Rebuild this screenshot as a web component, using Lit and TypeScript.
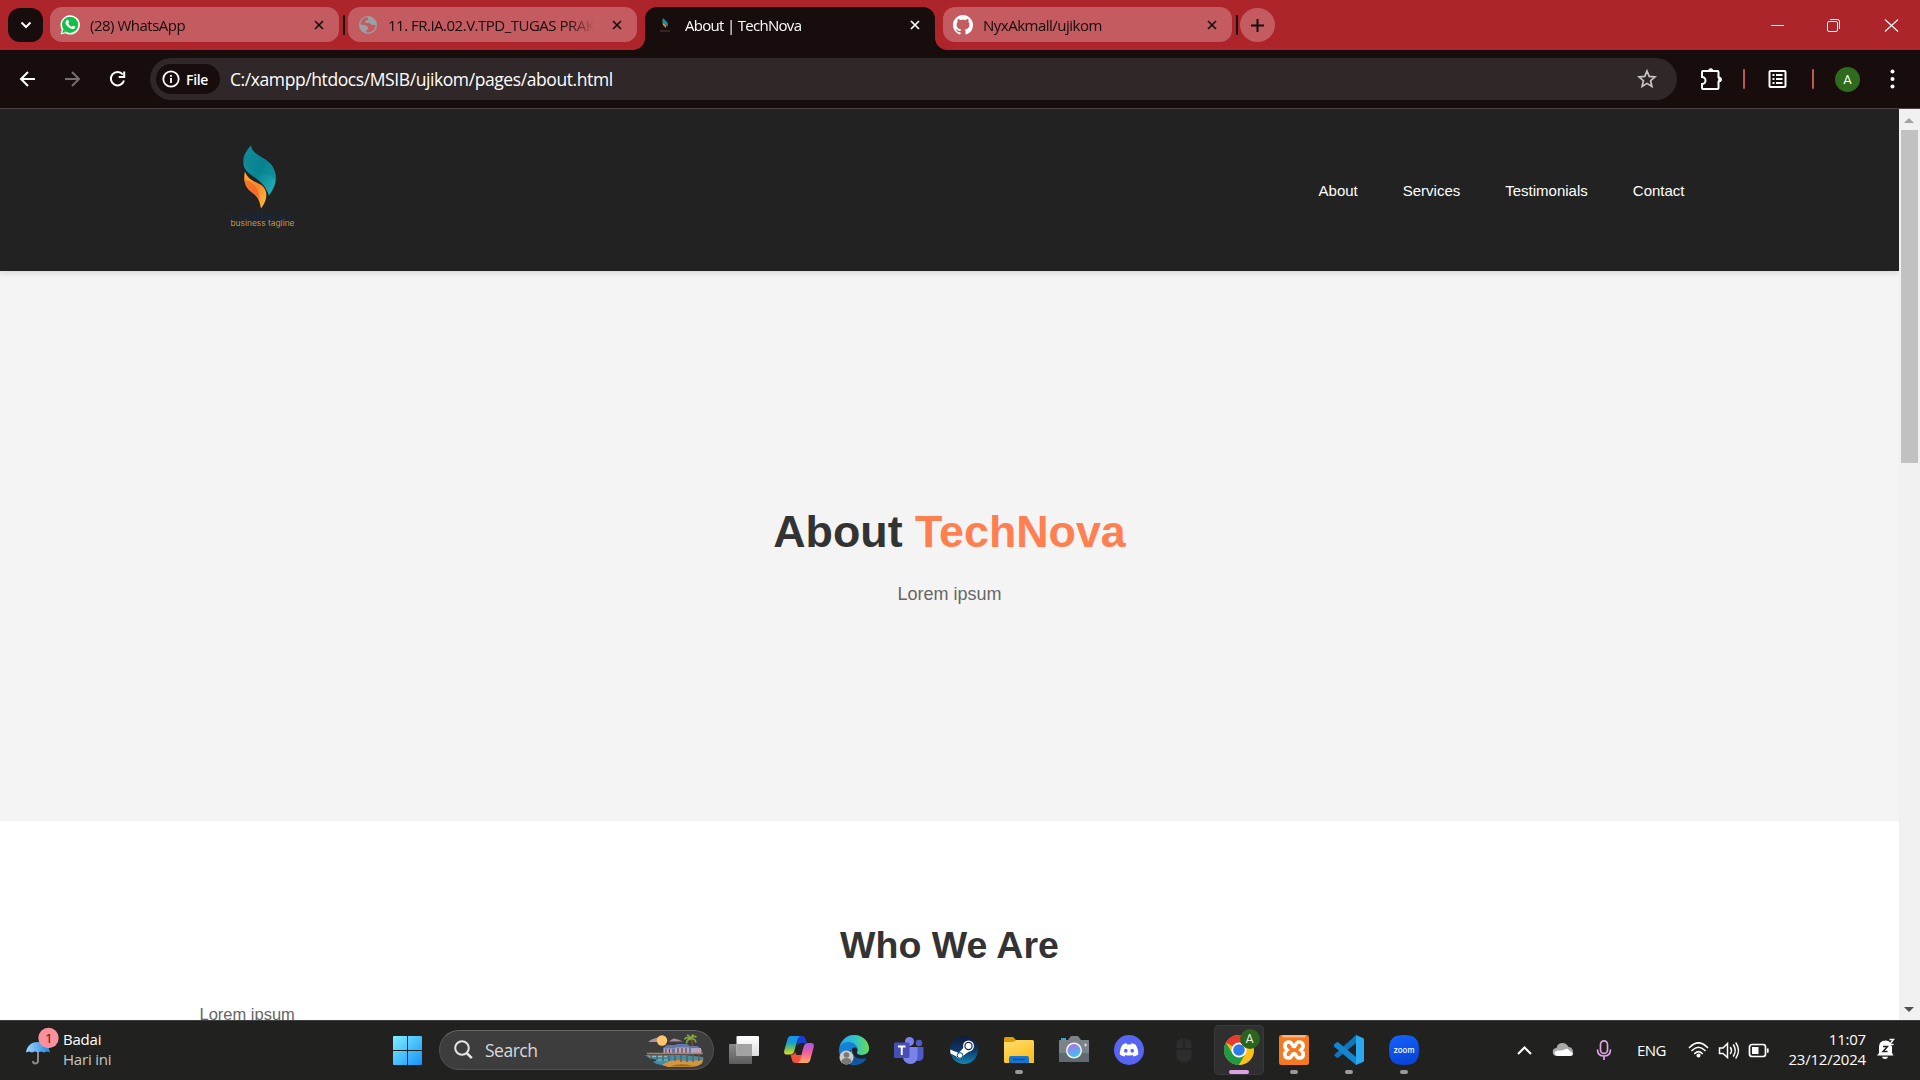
import { LitElement, html, css, svg, TemplateResult } from "lit";
import { customElement, property } from "lit/decorators.js";

const closeIcon = html`<svg class="close" width="10" height="10" viewBox="0 0 10 10"><path d="M1 1l8 8M9 1l-8 8" stroke="currentColor" stroke-width="1.700" fill="none" /></svg>`;

const flame = svg`
  <path d="M51 15C45 22 42 28 44 36C47 46 63 47 69 65C77 55 78 45 72 35C66 27 52 25 51 15Z" fill="url(#teal)"/>
  <path d="M44 32C50 43 68 42 75 49C78 42 72 35 66 29C58 24 52 22 51 15C45 22 42 26 44 32Z" fill="#0b7f8b" opacity=".45"/>
  <path d="M45 41C43 50 45 57 52 62C58 66 60 71 61 78C68 69 68 60 62 55C56 51 48 50 45 41Z" fill="url(#amber)"/>
  <path d="M45 41C43 50 45 57 52 62C56 64 58 66 59 70C60 60 56 53 45 49Z" fill="#f4632a" opacity=".75"/>`;

const whatsapp = html`<svg width="20" height="20" viewBox="0 0 20 20">
  <path d="M.5 19.600L1.800 14.800A9.700 9.700 0 1 1 5.300 18.300Z" fill="#fff"/>
  <circle cx="10.100" cy="9.800" r="8.100" fill="#12c143"/><path d="M2.200 17.900l1-3.700 2.700 2.700z" fill="#12c143"/>
  <path d="M6.700 5.200c.8-.7 1.400-.5 1.700.2l.7 1.700c.1.500-.6 1-.8 1.400 1 1.800 2 2.600 3.600 3.300.5-.3.900-1.200 1.400-1.100l1.700.9c.6.400.1 1.700-.7 2.200-1.200.8-3 .3-4.900-.8-1.700-1-3-2.500-3.600-3.900-.6-1.500-.1-3.200.9-3.900z" fill="#fff"/></svg>`;
const globe = html`<svg width="20" height="20" viewBox="0 0 20 20"><circle cx="10" cy="10" r="9" fill="#9aa0a6"/>
  <path d="M8.500 2.500C5 3 2.500 6 2.600 9.500L7 10l3 2v2.500l-2 1 .5 2c5 .8 9-3 9-7.500h-3.500L11.500 8H7.500V6l2.500-1.500V2.400z" fill="#c35b60"/>
  <path d="M13 3.200l-1.500 2.300 1.500 2 3.500.8C16.300 5.900 15 4.200 13 3.200z" fill="#9aa0a6"/></svg>`;
const smallFlame = html`<svg width="20" height="20" viewBox="0 0 20 20"><path d="M8 3Q6.500 6 8 8L12.500 11.500Q14 8.500 11 6Z" fill="#13909d"/><path d="M7.500 7.500Q7.500 10 9 11L11 13Q12 11 10 9.500Z" fill="#f5942d"/><path d="M5 16h10" stroke="#4e4138"/></svg>`;
const github = html`<svg width="20" height="20" viewBox="0 0 16 16"><path fill="#fff" d="M8 0C3.580 0 0 3.580 0 8c0 3.540 2.290 6.530 5.470 7.590.4.070.55-.17.55-.38 0-.19-.01-.82-.01-1.490-2.010.37-2.530-.49-2.690-.94-.09-.23-.48-.94-.82-1.130-.28-.15-.68-.52-.01-.53.63-.01 1.080.58 1.230.82.72 1.210 1.870.87 2.330.66.07-.52.28-.87.51-1.070-1.780-.2-3.640-.89-3.640-3.950 0-.87.31-1.590.82-2.150-.08-.2-.36-1.020.08-2.120 0 0 .67-.21 2.200.82.64-.18 1.320-.27 2-.27s1.360.09 2 .27c1.530-1.040 2.200-.82 2.200-.82.44 1.100.16 1.920.08 2.120.51.56.82 1.270.82 2.150 0 3.070-1.870 3.750-3.650 3.950.29.25.54.73.54 1.480 0 1.070-.01 1.930-.01 2.200 0 .21.15.46.55.38A8.010 8.010 0 0 0 16 8c0-4.420-3.580-8-8-8z"/></svg>`;

@customElement("browser-tab")
class BrowserTab extends LitElement {
  @property() label = "";
  @property({ attribute: false }) icon: TemplateResult | null = null;
  @property({ type: Boolean, reflect: true }) active = false;
  static styles = css`
    :host { display: block; width: 289px; height: 35px; flex: none; }
    :host([active]) { width: 290px; }
    .tab { height: 35px; box-sizing: border-box; border-radius: 12px; background: #c35b60; color: #160d0c; display: flex; align-items: center; padding: 0 15px 0 10px; position: relative; }
    :host([active]) .tab { background: #160d0c; color: #fff; height: 43px; border-radius: 12px 12px 0 0; padding-bottom: 8px; }
    .label { flex: 1; margin: 0 17px 0 10px; white-space: nowrap; overflow: hidden; font: 15px/20px "Open Sans", sans-serif; letter-spacing: -0.500px; mask-image: linear-gradient(90deg, #000 calc(100% - 28px), transparent); }
    :host([active]) .label { letter-spacing: -0.700px; }
    .close { flex: none; }
    .flare { position: absolute; bottom: 0; width: 12px; height: 12px; display: none; }
    :host([active]) .flare { display: block; }
    .left { left: -12px; background: radial-gradient(circle at 0 0, transparent 11.500px, #160d0c 12.200px); }
    .right { right: -12px; background: radial-gradient(circle at 100% 0, transparent 11.500px, #160d0c 12.200px); }
  `;
  render() {
    return html`<div class="tab">${this.icon}<span class="label">${this.label}</span>${closeIcon}<i class="flare left"></i><i class="flare right"></i></div>`;
  }
}

@customElement("browser-chrome")
class BrowserChrome extends LitElement {
  static styles = css`
    :host { display: block; font-family: "Open Sans", sans-serif; }
    .strip { height: 50px; background: #ad252b; display: flex; align-items: flex-start; box-sizing: border-box; padding: 7px 0 0 8px; }
    .drop { width: 35px; height: 34px; border-radius: 12px; background: #160d0c; margin: 1px 7px 0 0; display: grid; place-items: center; }
    .bar { width: 2.500px; height: 20px; margin: 8px 3px 0 3.500px; border-radius: 1px; background: #160d0c; }
    .plus { width: 35px; height: 34px; border-radius: 50%; background: #c35b60; margin: 1px 0 0 -1px; display: grid; place-items: center; }
    .gapA { margin-left: 8px; }
    .controls { margin-left: auto; display: flex; height: 35px; align-items: center; }
    .controls svg { display: block; }
    .tools { height: 59px; box-sizing: border-box; border-bottom: 1px solid #4a4342; background: #160d0c; display: flex; align-items: center; }
    .tools > svg { display: block; flex: none; }
    .omni { width: 1527px; height: 42px; border-radius: 21px; background: #302728; display: flex; align-items: center; box-sizing: border-box; padding: 0 20px 0 6px; margin-left: 22px; flex: none; }
    .chip { width: 64px; height: 30px; border-radius: 15px; background: #160d0c; display: flex; align-items: center; box-sizing: border-box; padding-left: 6px; gap: 6px; color: #fff; font-size: 14px; font-weight: 600; letter-spacing: -.3px; }
    .url { flex: 1; margin-left: 10px; color: #fff; font-size: 17.500px; line-height: 24px; letter-spacing: -.41px; white-space: nowrap; }
    .rule { width: 2px; height: 20px; background: #c0565b; border-radius: 1px; }
    .me { width: 25px; height: 25px; border-radius: 50%; background: #2f6a1d; color: #fff; font: 13px/25px Roboto, sans-serif; text-align: center; margin-left: 21px; }
    .tools > * { flex: none; }
  `;
  render() {
    return html`
      <div class="strip">
        <div class="drop"><svg width="12" height="8" viewBox="0 0 12 8"><path d="M1.500 1.500L6 6l4.500-4.500" fill="none" stroke="#fff" stroke-width="2"/></svg></div>
        <browser-tab label="(28) WhatsApp" .icon=${whatsapp}></browser-tab>
        <div class="bar"></div>
        <browser-tab label="11. FR.IA.02.V.TPD_TUGAS PRAKTIK" .icon=${globe}></browser-tab>
        <browser-tab class="gapA" active label="About | TechNova" .icon=${smallFlame}></browser-tab>
        <browser-tab class="gapA" label="NyxAkmall/ujikom" .icon=${github}></browser-tab>
        <div class="bar"></div>
        <div class="plus"><svg width="13" height="13" viewBox="0 0 13 13"><path d="M6.500 0v13M0 6.500h13" stroke="#160d0c" stroke-width="2"/></svg></div>
        <div class="controls">
          <svg width="150" height="20" viewBox="0 0 150 20" fill="none" stroke="#fff">
            <path d="M1 10.500h13"/>
            <rect x="57.500" y="6.500" width="10" height="10" rx="1.500"/><path d="M60 4.500h7.500q2 0 2 2V14" />
            <path d="M115 4.500l13 12M128 4.500l-13 12" stroke-width="1.100"/>
          </svg>
        </div>
      </div>
      <div class="tools">
        <svg width="128" height="30" viewBox="0 0 128 30" fill="none" stroke="#fff" stroke-width="2">
          <path d="M35 15H21M28 8l-7 7 7 7"/>
          <path d="M65 15h14M72 8l7 7-7 7" stroke="#766e6d"/>
          <path d="M122.800 10.500A6.700 6.700 0 1 0 124 16.500M124.200 7.500v5.500h-5.500"/>
        </svg>
        <div class="omni">
          <div class="chip"><svg width="18" height="18" viewBox="0 0 18 18" fill="none" stroke="#fff" stroke-width="1.800"><circle cx="9" cy="9" r="7.700"/><path d="M9 8v5M9 5v1.800"/></svg>File</div>
          <span class="url">C:/xampp/htdocs/MSIB/ujikom/pages/about.html</span>
          <svg width="20" height="20" viewBox="0 0 20 20"><path d="M10 2l2.200 5.400 5.800.5-4.400 3.800 1.300 5.700L10 14.400l-4.900 3 1.300-5.700L2 7.900l5.800-.5z" fill="none" stroke="#c9c5c5" stroke-width="1.700"/></svg>
        </div>
        <svg width="66" height="28" viewBox="0 0 66 28" fill="none" stroke="#fff" stroke-width="2">
          <path d="M26 6h14.500q1 0 1 1v5.500a2.300 2.300 0 0 1 0 4V23q0 1-1 1H26q-1 0-1-1v-4a3.500 3.500 0 0 0 0-7V7q0-1 1-1z"/><path d="M31.500 5.500a2.300 2.300 0 0 1 4.500 0z" fill="#fff" stroke-width="1"/><path d="M42 12a2.500 2.500 0 0 1 0 5z" fill="#fff" stroke-width="1"/>
        </svg>
        <div class="rule"></div>
        <svg width="67" height="24" viewBox="0 0 67 24" fill="none" stroke="#fff" stroke-width="2">
          <rect x="24.500" y="4" width="16" height="16" rx="1"/><path d="M27.500 8h2M27.500 12h2M27.500 16h2M31 8h6.500M31 12h6.500M31 16h6.500" stroke-width="1.800"/>
        </svg>
        <div class="rule"></div>
        <div class="me">A</div>
        <svg width="40" height="24" viewBox="0 0 40 24" fill="#fff"><circle cx="32.500" cy="4.500" r="2"/><circle cx="32.500" cy="12" r="2"/><circle cx="32.500" cy="19.500" r="2"/></svg>
      </div>`;
  }
}

@customElement("site-page")
class SitePage extends LitElement {
  static styles = css`
    :host { display: flex; height: 911px; overflow: hidden; background: #fff; font-family: "Liberation Sans", Arial, sans-serif; }
    .doc { width: 1899px; height: 911px; overflow: hidden; flex: none; }
    .nav { height: 162px; background: #222; box-shadow: 0 2px 6px rgba(0,0,0,.12); position: relative; display: flex; align-items: center; justify-content: space-between; box-sizing: border-box; padding: 0 214.500px 0 200px; }
    .logo { display: block; }
    .links { display: flex; gap: 45px; color: #fff; font-size: 15px; line-height: 20px; padding-top: 2px; }
    .hero { height: 550px; background: #f4f4f4; text-align: center; box-sizing: border-box; padding-top: 234px; }
    h1 { margin: 0; font-size: 44.800px; line-height: 52px; color: #333; }
    .brand { color: #ff7f50; }
    .lead { margin: 24px 0 0; font-size: 18px; line-height: 26px; color: #666; }
    h2 { margin: 0; padding-top: 102px; text-align: center; font-size: 37.500px; line-height: 44px; color: #333; }
    .copy { margin: 35px 0 0 199.500px; font-size: 16.500px; line-height: 24px; color: #666; }
    .scroll { width: 21px; background: #f1f1f1; display: flex; flex-direction: column; align-items: center; box-sizing: border-box; padding: 9px 1px 8px 0; }
    .up, .down { width: 0; height: 0; border: 5px solid transparent; border-top: 0; border-bottom: 5px solid #a3a3a3; }
    .thumb { width: 17px; height: 333px; background: #c1c1c1; margin-top: 7px; margin-bottom: auto; }
    .down { border-bottom: 0; border-top: 5px solid #505050; }
  `;
  render() {
    return html`
      <div class="doc">
        <div class="nav">
          <svg class="logo" width="125" height="125" viewBox="0 0 125 125">
            <defs>
              <linearGradient id="teal" x1="0" y1="0" x2="1" y2="1"><stop offset="0" stop-color="#1a9aa8"/><stop offset=".5" stop-color="#078591"/><stop offset="1" stop-color="#26b6c0"/></linearGradient>
              <linearGradient id="amber" x1="0" y1="0" x2="1" y2="1"><stop offset="0" stop-color="#ffb52b"/><stop offset=".5" stop-color="#f7862f"/><stop offset="1" stop-color="#fbc23a"/></linearGradient>
            </defs>
            <g transform="translate(0 2.500)">${flame}</g>
            <text x="30.500" y="92" font-family="Lato, sans-serif" font-size="10" fill="#122a4c" textLength="63" lengthAdjust="spacingAndGlyphs">COMPANY</text>
            <text x="30.500" y="98" font-family="Inter, sans-serif" font-size="7.500" fill="#c39a52" textLength="64" lengthAdjust="spacingAndGlyphs">business tagline</text>
          </svg>
          <div class="links"><span>About</span><span>Services</span><span>Testimonials</span><span>Contact</span></div>
        </div>
        <div class="hero">
          <h1>About <span class="brand">TechNova</span></h1>
          <p class="lead">Lorem ipsum</p>
        </div>
        <h2>Who We Are</h2>
        <p class="copy">Lorem ipsum</p>
      </div>
      <div class="scroll"><i class="up"></i><i class="thumb"></i><i class="down"></i></div>`;
  }
}

const apps: { art: TemplateResult; run?: string }[] = [
  { art: svg`<defs><linearGradient id="tv" x2="0" y2="1"><stop stop-color="#fff"/><stop offset="1" stop-color="#ddd"/></linearGradient><linearGradient id="tg" x2="0" y2="1"><stop stop-color="#8a8a8a"/><stop offset="1" stop-color="#5d5d5d"/></linearGradient></defs>
      <rect y="9" width="23" height="20" rx="1" fill="url(#tg)"/><rect x="7.500" y="1" width="22.500" height="20" rx="1" fill="url(#tv)"/><rect x="7.500" y="9" width="15.500" height="12" fill="#a3a3a3"/>` },
  { art: svg`<defs><linearGradient id="cpa" x2="0" y2="1"><stop stop-color="#1593f2"/><stop offset=".35" stop-color="#159ed0"/><stop offset=".65" stop-color="#62bf68"/><stop offset="1" stop-color="#f4d51c"/></linearGradient><linearGradient id="cpb" x2="0" y2="1"><stop stop-color="#a757ee"/><stop offset=".5" stop-color="#f2609a"/><stop offset="1" stop-color="#ffab5e"/></linearGradient></defs>
      <path d="M14 1h4c2 0 3 1 3.500 3l1.200 4H17l-4 2z" fill="#1a3fd0"/>
      <path d="M6.500 1H17c-2 0-2.800 1.500-3.400 3.500L10.300 16c-.6 2-1.800 3.500-4 3.500H2.800C.5 19.500-.3 18 .3 15.500L3.400 4.500C4 2.300 5 1 6.500 1z" fill="url(#cpa)"/>
      <path d="M16 28h-4.500c-2 0-3-1-3.500-3L6.700 20c2.300 0 3.600-1 4.300-3l1.500 3h5z" fill="#f2503c"/>
      <path d="M23 28H12.800c2 0 2.800-1.500 3.400-3.500l3.400-12.500c.6-2.300 1.800-4 4-4h3.600c2.300 0 3.100 1.500 2.500 4l-3.300 12.500C25.800 26.700 24.800 28 23 28z" fill="url(#cpb)"/>` },
  { art: svg`<defs><linearGradient id="eg"><stop stop-color="#2aa6e8"/><stop offset=".5" stop-color="#2fc4c9"/><stop offset="1" stop-color="#69dc4f"/></linearGradient></defs>
      <circle cx="15" cy="15" r="15" fill="#1580d6"/><path d="M1 11C4 3 10 0 15 0c9 0 15 7 15 13 0 5-4 7-7.500 7-3 0-5-1-4.500-2.500 1-2 1-3 .5-4.500C16 6 6 5 1 11z" fill="url(#eg)"/>
      <path d="M12 15c-2 7 3 14 15 9-4 7-16 8-20 1-2-4-1-10 5-10z" fill="#1255a0"/><path d="M13 14c2-3 7-1 5 3-.6 2 1.500 3 4.500 3 3 0 6-1 7.500-4v7l-2.500 1c-8 3-15-3-14.500-10z" fill="#212120"/>
      <path d="M13 16c0 6 6 9 14.500 7q-1.500 3-5 5-7 1-9.500-5z" fill="#1255a0"/>
      <circle cx="7.500" cy="22.500" r="7" fill="#cfcbc6"/><circle cx="7.500" cy="20" r="2.800" fill="#777"/><path d="M2.500 27q0-4 5-4t5 4q-5 5-10 0z" fill="#777"/>` },
  { art: svg`<circle cx="15.500" cy="6.500" r="4.500" fill="#7b83eb"/><circle cx="25" cy="8" r="3.200" fill="#5059c9"/><path d="M20 12h9.500v9c0 3-2 5-5 5s-5-2-5-5z" fill="#5059c9"/><path d="M9 12h14.500v10c0 4-3 7-7 7s-7.500-3-7.500-7z" fill="#7b83eb"/><rect y="7.500" width="15.500" height="15.500" rx="1.500" fill="#464eb8"/><path d="M4 11.500h7.500M7.750 11.500V20" stroke="#fff" stroke-width="1.900"/>` },
  { art: svg`<defs><linearGradient id="st" x2="0" y2="1"><stop stop-color="#111a3c"/><stop offset=".5" stop-color="#0c3766"/><stop offset="1" stop-color="#1387b8"/></linearGradient></defs><circle cx="15" cy="15" r="14" fill="url(#st)"/><path d="M1.200 14.500l8.500 3.500 5-5.500 6 3.500-6 4.200a4 4 0 0 1-7.500 1L1.500 18.500z" fill="#fff"/><circle cx="19.500" cy="11" r="5.500" fill="#fff"/><circle cx="19.500" cy="11" r="3.600" fill="#fff" stroke="#10284f" stroke-width="1.200"/><circle cx="11" cy="20.500" r="2.800" fill="#fff" stroke="#10496f"/>` },
  { run: "on", art: svg`<defs><linearGradient id="fo" x2=".6" y2="1"><stop stop-color="#ffdf70"/><stop offset="1" stop-color="#fdbe1c"/></linearGradient></defs><path d="M0 3.500Q0 2 1.500 2H9l3.500 3.500V10H0z" fill="#dd9d09"/><path d="M0 7h9l3.500-2H28.500Q30 5 30 6.500V28H1.500Q0 28 0 26.500z" fill="url(#fo)"/><path d="M5 28v-5q0-2 2-2h16q2 0 2 2v5z" fill="#1476cf"/><path d="M9 24.500h12" stroke="#0b4e94" stroke-width="1.500"/>` },
  { art: svg`<rect x="2" y="3" width="5" height="3" fill="#24a9e6"/><path d="M0 6q0-1 1-1h8l3-4h7l3 4h7q1 0 1 1v20q0 1-1 1H1q-1 0-1-1z" fill="#7b838a"/><path d="M0 18h30v8q0 1-1 1H1q-1 0-1-1z" fill="#626a71"/><defs><linearGradient id="ca" x2=".4" y2="1"><stop stop-color="#b86adf"/><stop offset="1" stop-color="#3ec0f5"/></linearGradient></defs><circle cx="15" cy="15.500" r="8" fill="#f3f3f3"/><circle cx="15" cy="15.500" r="6.500" fill="url(#ca)"/><path d="M26.500 8.500v3M25 10h3" stroke="#ddd"/>` },
  { art: svg`<circle cx="15" cy="15" r="15" fill="#5865f2"/><path d="M8.700 9.500Q11 8.400 12.600 8.300L13.200 9.600Q15 9.300 16.800 9.600L17.400 8.300Q19.500 8.500 21.400 9.500Q24.600 14 24.200 19.500Q22 21.200 19.600 21.600L18.700 20Q15 21 11.300 20L10.400 21.600Q8 21.200 5.800 19.500Q5.600 14 8.700 9.500z" fill="#fff"/><ellipse cx="11.800" cy="15.700" rx="1.800" ry="2" fill="#5865f2"/><ellipse cx="18.200" cy="15.700" rx="1.800" ry="2" fill="#5865f2"/>` },
  { art: svg`<path d="M14.200 3v10H7.500v-3.500Q7.500 4 14.200 3zM15.800 3v10h6.700v-3.500Q22.500 4 15.800 3zM7.500 14.500h15V21q0 6-7.500 6t-7.500-6z" fill="#2d2d2d"/>` },
  { run: "main", art: svg`<circle cx="15" cy="15" r="15" fill="#fbbc1b"/><path d="M15 15L2 7.500A15 15 0 0 1 28 7.500L28 8H15z" fill="#e63b2e"/><path d="M2 7.500A15 15 0 0 0 15 30L21.500 18.700 8.500 18.700z" fill="#219a47"/><path d="M15 8H28a15 15 0 0 1-13 22l6.500-11z" fill="#fbc116"/><circle cx="15" cy="15" r="7.500" fill="#fff"/><circle cx="15" cy="15" r="5.800" fill="#2c7be8"/>` },
  { run: "on", art: svg`<rect width="30" height="30" rx="2.500" fill="#f37a20"/><path d="M3 0h24l-1 2.500H4z" fill="#f9b27e"/><path d="M10 7c-5 0-5 5.500-2 8-3 2.500-3.500 8 1.500 8 4 0 3-4.500 5.500-4.500s1.500 4.500 5.500 4.500c5 0 4.500-5.500 1.500-8 3-2.500 3-8-2-8-4 0-2.500 4.500-5 4.500S14 7 10 7z" fill="none" stroke="#fff" stroke-width="3.600"/>` },
  { run: "on", art: svg`<path d="M0 20l2.500 2.500q1 .8 2 0L22 8V0z" fill="#0f76bd"/><path d="M0 9.500L2.500 7.500q1-.8 2 0L22 22v8L0 11.500q-.8-1 0-2z" fill="#1486cf"/><path d="M22 0l7 3q1 .5 1 1.500v21q0 1-1 1.500l-7 3z" fill="#28a9f0"/>` },
  { run: "on", art: svg`<defs><linearGradient id="zm" x2=".3" y2="1"><stop stop-color="#1463ff"/><stop offset="1" stop-color="#0a45d8"/></linearGradient></defs><path d="M15 0C26 0 30 4 30 15S26 30 15 30 0 26 0 15 4 0 15 0z" fill="url(#zm)"/><text x="4.500" y="17.500" font-family="Inter, sans-serif" font-weight="500" font-size="8" fill="#fff" textLength="21" lengthAdjust="spacingAndGlyphs">zoom</text>` },
];

@customElement("task-bar")
class TaskBar extends LitElement {
  static styles = css`
    :host { display: flex; height: 60px; background: #212120; border-top: 1px solid #3c3e3e; box-sizing: border-box; color: #fff; font: 15px/20px "Open Sans", sans-serif; align-items: flex-start; }
    svg { display: block; flex: none; }
    .weather { width: 393px; display: flex; padding-top: 8px; flex: none; }
    .wx { margin: -3px 2px 0 25px; }
    .dim { color: #c6c6c6; }
    .words { letter-spacing: -.2px; }
    .start { margin-top: 15px; }
    .search { width: 275px; height: 40px; margin: 9px 15px 0 17px; border-radius: 20px; box-sizing: border-box; border: 1px solid #505050; border-top-color: #666; background: #3d3d3d; display: flex; align-items: center; padding: 0 8px 0 14px; flex: none; }
    .ph { flex: 1; color: #dadada; font-size: 17.500px; line-height: 24px; letter-spacing: -.5px; margin-left: 12px; }
    .apps { display: flex; gap: 5px; margin: 4px 0 0 -10px; }
    .app { width: 50px; height: 50px; border-radius: 5px; box-sizing: border-box; padding: 10px 10px 0; position: relative; }
    .app.main { background: #2f2f2f; box-shadow: inset 0 0 0 1px #3a3a3a; }
    .pip { display: block; height: 4px; width: 8px; border-radius: 2px; background: #9a9a9a; margin: 5px auto 0; }
    .main .pip { width: 20px; background: #dda1e4; }
    .badge { position: absolute; left: 25.500px; top: 4px; width: 20px; height: 20px; border-radius: 50%; background: #2c641c; font: 12.500px/20px Roboto, sans-serif; color: #e4eee0; text-align: center; }
    .tray { margin-left: auto; display: flex; }
    .eng { width: 31px; margin: 19px 20px 0 0; letter-spacing: -.6px; }
    .clock { width: 97px; text-align: right; padding-top: 8px; letter-spacing: -.2px; }
    .bell { margin: 16px 24px 0 10px; }
    .net { margin-top: 19px; }
  `;
  render() {
    return html`
      <div class="weather">
        <svg class="wx" width="36" height="44" viewBox="0 0 36 44">
          <defs><linearGradient id="um"><stop stop-color="#9fd4fb"/><stop offset="1" stop-color="#1e86e4"/></linearGradient></defs>
          <path d="M13 24v11a2.500 2.500 0 0 1-5 0" fill="none" stroke="#8b8b8b" stroke-width="2" />
          <path d="M1 26.500C2 19 7 16 13 16s11 3 12 10.500l-3-1-3 1-3-1-3 1-3-1-3 1-3-1z" fill="url(#um)"/>
          <circle cx="23.500" cy="12" r="10.200" fill="#fb909c"/><text x="20" y="17" font-family="Open Sans, sans-serif" font-size="13.500" fill="#30191c">1</text>
        </svg>
        <div class="words"><div>Badai</div><div class="dim">Hari ini</div></div>
      </div>
      <svg class="start" width="29" height="29" viewBox="0 0 29 29"><defs><linearGradient id="win" gradientUnits="userSpaceOnUse" x1="0" y1="0" x2="29" y2="29"><stop stop-color="#7df0ff"/><stop offset="1" stop-color="#1592f8"/></linearGradient></defs><path fill="url(#win)" d="M0 1q0-1 1-1h13v14H0zM15 0h13q1 0 1 1v13H15zM0 15h14v14H1q-1 0-1-1zM15 15h14v13q0 1-1 1H15z"/></svg>
      <div class="search">
        <svg width="19" height="20" viewBox="0 0 19 20" fill="none" stroke="#e4e6ea"><circle cx="8" cy="8" r="6.800" stroke-width="2"/><path d="M12.800 13.200l5 5" stroke-width="2.600"/></svg>
        <span class="ph">Search</span>
        <svg width="61" height="33" viewBox="0 0 61 33">
          <path d="M4 8q3-3 8-4l3-1 3 5z" fill="#b08f9c"/><path d="M25 7.500q2-2 5-3l4 1 5 2z" fill="#a98a9b"/><circle cx="18" cy="6.500" r="5.200" fill="#fdc56f"/>
          <path d="M1 21h40l18 2q2 5-5 7l-20 2Q14 32 9 28l5-2-9-2z" fill="#3b8fb0"/><path d="M5 22.500h18M12 26h12" stroke="#7cc3cf"/>
          <path d="M18 31q10-7 24-4l17-1q0 6-12 7H24z" fill="#d3963e"/><path d="M26 32.500h24l-7-2q-10-1-17 2z" fill="#a36a21"/>
          <path d="M48 16Q49.500 9 46.500 5" stroke="#7d5229" stroke-width="1.500" fill="none"/>
          <path d="M46.500 5Q42 2 40.500 5.500M46.500 5Q42.500 5.500 42.500 9.500M46.500 5Q51 4 52 8.500M46.500 5Q49.500 1 52.500 3M46.500 5Q45.500 1.500 43 1M46.500 5Q47.500 2 49.500.500" stroke="#86a53c" stroke-width="1.600" fill="none"/>
          <path d="M19 14l4-3h8l2-1h10l3 2h8l4 4v4H19z" fill="#5d79ae"/><path d="M20 14.500h10v4.500H20zM31 13.500h14V19H31zM47 14h10v5H47z" fill="#b9a3b5"/><path d="M22 15v4M25.500 15v4M29 15v4M34 14v5M38 14v5M42 14v5" stroke="#594664" stroke-width="1.200"/>
          <path d="M3 19.500h56" stroke="#a58567" stroke-width="1.600"/><path d="M7 20v5M13 20v6M19 20v7M25 20v7M31 20v7M37 20v8M43 20v8M49 20v8M55 20v7" stroke="#745742" stroke-width="1.500"/>
        </svg>
      </div>
      <div class="apps">
        ${apps.map((a) => html`<div class="app ${a.run ?? ""}"><svg width="30" height="30" viewBox="0 0 30 30">${a.art}</svg>${a.run ? html`<i class="pip"></i>` : ""}${a.run === "main" ? html`<span class="badge">A</span>` : ""}</div>`)}
      </div>
      <div class="tray">
        <svg class="net" width="121" height="22" viewBox="0 0 121 22" fill="none" stroke="#fff">
          <path d="M2 14l6.500-6.500L15 14" stroke-width="2"/>
          <path d="M41 16a4 4 0 0 1-.5-8q1-5 6-5 4 0 6 4 4 0 4.500 4.500 0 4.500-4 4.500z" fill="#a9a9a9" stroke="none"/><path d="M41.500 16q-3-1-3-3.500 1-2 3.500-2l4 0 5-2 6 5q0 2.500-3.500 2.500z" fill="#fff" stroke="none"/>
          <g stroke="#dda1e4" stroke-width="1.700"><rect x="84.500" y=".9" width="7" height="12.500" rx="3.500"/><path d="M81.500 9.500q0 6.500 6.500 6.500t6.500-6.500M88 16v4"/></g>
        </svg>
        <div class="eng">ENG</div>
        <svg class="net" width="81" height="22" viewBox="0 0 81 22" fill="none" stroke="#fff" stroke-width="1.700" stroke-linecap="round">
          <path d="M1.500 7.500q9-9 18 0M4 10.500q6.500-6.500 13 0M6.800 13.500q3.700-3.700 7.400 0"/><circle cx="10.500" cy="15.500" r="1.200" fill="#fff"/>
          <path d="M31.500 8h3.500l4.500-4.500v14L35 13.500h-3.500zM42.500 7.500q2 3 0 6M45.500 5q3.500 5.500 0 11M48 3q5 7.500 0 15" stroke-width="1.500"/>
          <rect x="61.500" y="4.500" width="16" height="12" rx="2.500"/><rect x="64" y="7" width="6.500" height="7" fill="#fff" stroke="none"/><path d="M79.800 9v3"/>
        </svg>
        <div class="clock"><div>11:07</div><div>23/12/2024</div></div>
        <svg class="bell" width="20" height="24" viewBox="0 0 20 24"><path d="M3 10q0-6.500 6.500-6.500T16 10v6l1.500 2.500H1L3 16z" fill="#fff"/><path d="M6 19.800h6q-.5 2.200-3 2.200t-3-2.200z" fill="#fff"/><path d="M7 9.500h4.500L7 14.500h4.500" fill="none" stroke="#212120" stroke-width="1.500"/><path d="M12.500 1.500h6V9h-3.500z" fill="#212120"/><path d="M13.500 2.500h4L13.500 7.500h4" fill="none" stroke="#fff" stroke-width="1.400"/></svg>
      </div>`;
  }
}

@customElement("app-root")
class AppRoot extends LitElement {
  static styles = css`
    :host { display: flex; flex-direction: column; width: 1920px; height: 1080px; overflow: hidden; }
    task-bar, browser-chrome, site-page { flex: none; }
  `;
  render() {
    return html`<browser-chrome></browser-chrome><site-page></site-page><task-bar></task-bar>`;
  }
}
